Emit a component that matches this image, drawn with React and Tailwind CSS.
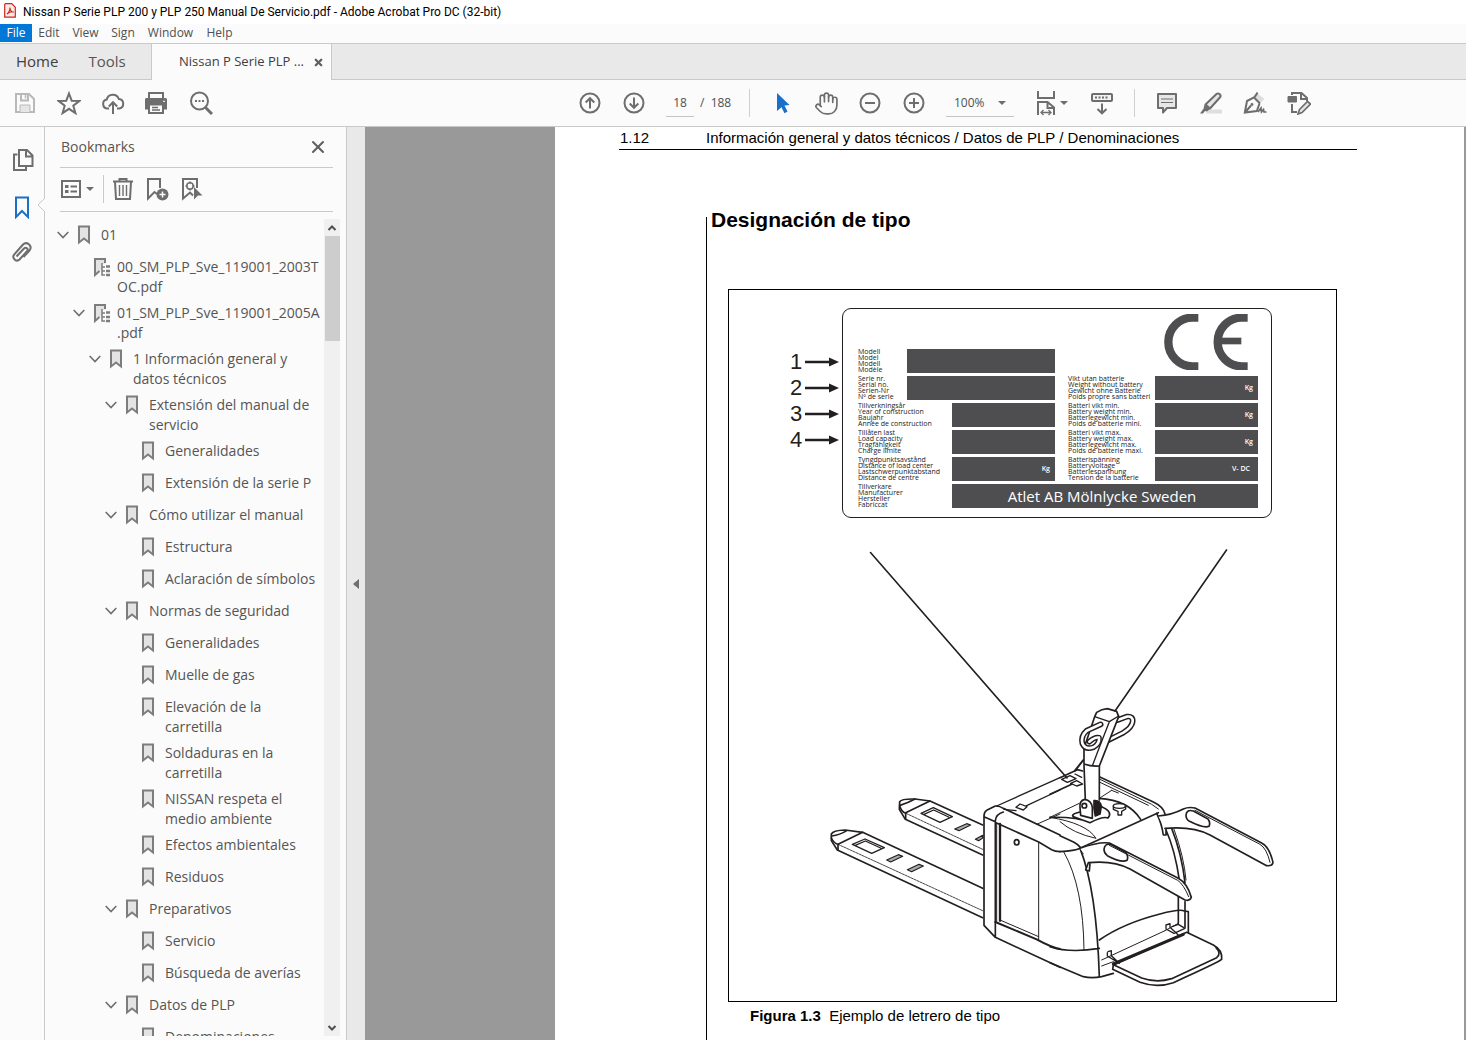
import React from "react";
import { Hand, X } from "lucide-react";

const UI = "font-['Open_Sans','Noto_Sans',sans-serif]";

function Svg({ size = "size-6", sw = 2, children }) {
  return (
    <svg viewBox="0 0 24 24" className={size + " shrink-0"} fill="none" stroke="currentColor" strokeWidth={sw} aria-hidden="true">
      {children}
    </svg>
  );
}

function ToolButton({ label, className = "w-11", children }) {
  return (
    <button type="button" aria-label={label} className={className + " flex h-11 shrink-0 items-center justify-center text-[#6e6e6e]"}>
      {children}
    </button>
  );
}

const Caret = () => (
  <svg viewBox="0 0 8 4" className="h-1 w-2 shrink-0" fill="#6e6e6e" aria-hidden="true"><path d="M0 0h8L4 4z" /></svg>
);

function TitleBar() {
  return (
    <header className="flex h-6 shrink-0 items-center bg-white pl-1 text-xs text-black">
      <svg viewBox="0 0 12 15" className="-mt-1 h-[15px] w-3" fill="none" stroke="#c8281e" aria-hidden="true">
        <path d="M1.5.7h6.2l3.6 3.6v9.9H.7V1.5z" fill="#fbe9e6" strokeWidth="1.2" />
        <path d="M3 11c1.600-1 3.200-4 2.900-6.400 0 3 2.200 4.700 3.900 4.400-2-.5-5 .3-6.800 2z" strokeWidth="1.100" />
      </svg>
      <h1 className="ml-[7px] font-[Roboto,sans-serif] whitespace-nowrap">Nissan P Serie PLP 200 y PLP 250 Manual De Servicio.pdf - Adobe Acrobat Pro DC (32-bit)</h1>
    </header>
  );
}

function MenuBar() {
  return (
    <nav className="flex h-[19px] shrink-0 items-start bg-[#fbfbfb] text-xs text-[#505050]">
      <button type="button" className="h-[18px] w-8 bg-[#0078d7] text-white">File</button>
      <button type="button" className="h-[18px] w-[34px]">Edit</button>
      <button type="button" className="h-[18px] w-[39px]">View</button>
      <button type="button" className="h-[18px] w-9">Sign</button>
      <button type="button" className="h-[18px] w-[59px]">Window</button>
      <button type="button" className="h-[18px] w-[39px]">Help</button>
    </nav>
  );
}

function TabBar() {
  return (
    <div className="flex h-[37px] shrink-0 border-t border-[#c9c9c9] bg-[#e9e9e9] text-[#404040]">
      <div className="flex w-[152px] items-center border-r border-b border-[#c9c9c9] text-[15px]">
        <button type="button" className="ml-4">Home</button>
        <button type="button" className="ml-[30px] text-[#555]">Tools</button>
      </div>
      <div className="flex w-[179px] items-center justify-between bg-[#fbfbfb] pr-[7px] pl-[27px] text-[13px]">
        <button type="button">Nissan P Serie PLP ...</button>
        <button type="button" aria-label="Close tab"><X className="size-[11px] text-[#606060]" strokeWidth={5} /></button>
      </div>
      <div className="flex-1 border-b border-l border-[#c9c9c9]" />
    </div>
  );
}

function Toolbar() {
  return (
    <div className="flex h-[47px] shrink-0 items-center border-b border-[#c9c9c9] bg-[#fbfbfb]">
      <div className="flex w-[568px] shrink-0 pl-[3px]">
        <ToolButton label="Save">
          <Svg><g stroke="#b9b9b9"><path d="M3 3h13l5 5v13H3z" /><path d="M8 3v6.500h7V3" /><path d="M12.500 4v3.500" strokeWidth="1.500" /><path d="M7 21v-7h10v7" fill="#e6e6e6" strokeWidth="1" /></g></Svg>
        </ToolButton>
        <ToolButton label="Star">
          <Svg><path d="M12 2.500l2.700 7.200 7.600.3-6 4.700 2.100 7.400L12 17.800l-6.400 4.300 2.100-7.400-6-4.700 7.600-.3z" /></Svg>
        </ToolButton>
        <ToolButton label="Upload to cloud">
          <Svg><path d="M8 17.500H6.500a4.500 4.500 0 0 1-.8-8.900A6.300 6.300 0 0 1 17.800 8a4.800 4.800 0 0 1 .5 9.500H16" /><path d="M12 23V11.500M7.800 15.500l4.200-4.300 4.200 4.300" /></Svg>
        </ToolButton>
        <ToolButton label="Print">
          <Svg><path d="M4 7V2h14v5" /><path d="M0 9c0-1.500.5-2 2-2h18c1.500 0 2 .5 2 2v9.500h-4V14H4v4.500H0z" fill="currentColor" stroke="none" /><path d="M4 13.500h14V22H4z" /><path d="M7 16.500h6M7 19h8" strokeWidth="1.300" /><path d="M18 10.300h2" stroke="#fff" strokeWidth="1" /></Svg>
        </ToolButton>
        <ToolButton label="Find">
          <Svg><circle cx="10.500" cy="10" r="8.500" /><path d="M16.500 16.500l6.500 6.500" strokeWidth="3" /><path d="M6 10h2M9.500 10h2M13 10h2" /></Svg>
        </ToolButton>
      </div>
      <ToolButton label="Previous page">
        <Svg><circle cx="12" cy="12" r="9.500" /><path d="M12 17.500V7.500M7.700 11.500L12 7.200l4.300 4.300" /></Svg>
      </ToolButton>
      <ToolButton label="Next page">
        <Svg><circle cx="12" cy="12" r="9.500" /><path d="M12 6.500v10M7.700 12.500l4.300 4.300 4.300-4.300" /></Svg>
      </ToolButton>
      <input aria-label="Page number" defaultValue="18" className="ml-[10px] h-7 w-7 border-b border-[#c4c4c4] bg-transparent text-center text-xs text-[#505050]" />
      <span className="ml-[6px] w-[49px] text-xs whitespace-pre text-[#505050]">/  188</span>
      <div className="h-7 w-px bg-[#cfcfcf]" />
      <ToolButton label="Select" className="ml-[11px] w-11">
        <svg viewBox="0 0 14 21" className="h-[21px] w-[14px]" fill="#1b6fc8"><path d="M1 0l12.500 12-5 .6 3 6-3 1.600-3-6L1 18z" /></svg>
      </ToolButton>
      <ToolButton label="Pan" className="-ml-px w-11"><Hand className="size-[25px]" strokeWidth={1.600} /></ToolButton>
      <ToolButton label="Zoom out"><Svg><circle cx="12" cy="12" r="9.500" /><path d="M7 12h10" /></Svg></ToolButton>
      <ToolButton label="Zoom in"><Svg><circle cx="12" cy="12" r="9.500" /><path d="M7 12h10M12 7v10" /></Svg></ToolButton>
      <div className="relative ml-[10px] w-[68px] shrink-0">
        <select aria-label="Zoom level" className="h-7 w-full appearance-none border-b border-[#c4c4c4] bg-transparent pl-2 text-xs text-[#505050]">
          <option>100%</option>
        </select>
        <div className="pointer-events-none absolute top-3 right-2"><Caret /></div>
      </div>
      <ToolButton label="Fit page" className="ml-[10px] w-14 gap-1">
        <svg viewBox="0 0 20 26" className="h-[26px] w-5" fill="none" stroke="currentColor" strokeWidth="2"><path d="M2 1v7h16V1M2 25V12h9.500l6.500 5.500V25M11.500 12v6H18" /><path d="M5 22.500h10M7.500 20L5 22.500 7.500 25M12.500 20l2.500 2.500-2.500 2.500" strokeWidth="1.300" /></svg>
        <Caret />
      </ToolButton>
      <ToolButton label="Page display">
        <Svg><rect x="2" y="3" width="20" height="7" rx="1" fill="#f2f2f2" /><path d="M5 6.500h14" strokeDasharray="2 1.500" /><path d="M12 12.500V22M7.500 18l4.500 4.300 4.500-4.300" /></Svg>
      </ToolButton>
      <div className="ml-[10px] h-7 w-px bg-[#cfcfcf]" />
      <ToolButton label="Comment" className="ml-[10px] w-11">
        <Svg><path d="M3 3h18v14h-9l-4 4.500V17H3z" fill="#e6e6e6" strokeLinejoin="round" /><path d="M6 8h12M6 11.500h12" strokeWidth="1.200" /></Svg>
      </ToolButton>
      <ToolButton label="Highlight">
        <Svg><path d="M9 18.500h14v4H7z" fill="#dedede" stroke="none" /><path d="M6.500 13.500L17.500 3c1.800-1.400 5 .5 3.800 3L11 17.500z" fill="#e6e6e6" strokeLinejoin="round" /><path d="M5.500 13.500l5.500 4.500-3 2.500-2-.5-2 2.500H1l3.500-4.800z" fill="currentColor" stroke="none" /></Svg>
      </ToolButton>
      <ToolButton label="Sign">
        <Svg><path d="M14 2l7.500 6-4 3.500L11 5.500z" fill="#dedede" stroke="none" /><path d="M14.500 1.500c-1 2-2 3.500-3.500 5L4 10 1.800 21.500l12-1.500 2.700-7.500M10.500 6l6.500 6.500M2 21.500l6-7" strokeWidth="2" /><circle cx="9" cy="13.500" r="1.400" fill="currentColor" stroke="none" /><path d="M15 21l3-4 .5 4 2-2.500.5 2.500h2.500" strokeWidth="1.700" /></Svg>
      </ToolButton>
      <ToolButton label="Edit PDF">
        <Svg><path d="M1 5.500h8.500V11H1z" fill="currentColor" strokeWidth="1" /><path d="M5 4V2h9.500l5.500 5v3M14 2v6h6" /><path d="M5 13v8h5" /><path d="M12.500 18.500l8-8 3 2.500-8.500 8.500-4 1.500z" fill="#e6e6e6" strokeWidth="1.700" /></Svg>
      </ToolButton>
    </div>
  );
}

function NavRail() {
  return (
    <div className="flex w-11 shrink-0 flex-col items-center bg-[#fbfbfb] pt-5">
      <button type="button" aria-label="Page thumbnails" className="ml-px flex h-[26px] items-center text-[#6e6e6e]">
        <Svg><path d="M6.500 6.500H3V22h12v-3.500" /><path d="M8 2h8l5.500 5.500V18H8zM15 2v6.500h6.500" /></Svg>
      </button>
      <button type="button" aria-label="Bookmarks" className="mt-[21px] flex h-[26px] items-center text-[#1b6fc8]">
        <Svg><path d="M6 2.500h12V22l-6-6-6 6z" /></Svg>
      </button>
      <button type="button" aria-label="Attachments" className="mt-5 flex h-[26px] items-center text-[#6e6e6e]">
        <Svg><path d="M6.500 15.500l7.500-8c2-2 4.800.5 3 2.700l-7.500 8.300c-3 3-8.300-1.500-5.200-5.200L13 3.500c3.500-3.500 10 1 6.500 6l-6 6.500" /></Svg>
      </button>
    </div>
  );
}

const bookmarks = [
  { level: 0, open: true, lines: ["01"] },
  { level: 1, file: true, lines: ["00_SM_PLP_Sve_119001_2003T", "OC.pdf"] },
  { level: 1, file: true, open: true, lines: ["01_SM_PLP_Sve_119001_2005A", ".pdf"] },
  { level: 2, open: true, lines: ["1 Información general y", "datos técnicos"] },
  { level: 3, open: true, lines: ["Extensión del manual de", "servicio"] },
  { level: 4, lines: ["Generalidades"] },
  { level: 4, lines: ["Extensión de la serie P"] },
  { level: 3, open: true, lines: ["Cómo utilizar el manual"] },
  { level: 4, lines: ["Estructura"] },
  { level: 4, lines: ["Aclaración de símbolos"] },
  { level: 3, open: true, lines: ["Normas de seguridad"] },
  { level: 4, lines: ["Generalidades"] },
  { level: 4, lines: ["Muelle de gas"] },
  { level: 4, lines: ["Elevación de la", "carretilla"] },
  { level: 4, lines: ["Soldaduras en la", "carretilla"] },
  { level: 4, lines: ["NISSAN respeta el", "medio ambiente"] },
  { level: 4, lines: ["Efectos ambientales"] },
  { level: 4, lines: ["Residuos"] },
  { level: 3, open: true, lines: ["Preparativos"] },
  { level: 4, lines: ["Servicio"] },
  { level: 4, lines: ["Búsqueda de averías"] },
  { level: 3, open: true, lines: ["Datos de PLP"] },
  { level: 4, lines: ["Denominaciones"] },
];

const indent = ["pl-3", "pl-7", "pl-11", "pl-[60px]", "pl-[76px]"];

function Bookmark({ item }) {
  return (
    <li className={indent[item.level] + " flex min-h-8 items-start py-[3px]"}>
      <span className="flex h-5 w-[21px] shrink-0 items-center">
        {item.open && (
          <button type="button" aria-label="Collapse">
            <svg viewBox="0 0 12 8" className="h-2 w-3" fill="none" stroke="#6e6e6e" strokeWidth="1.600"><path d="M.7 1L6 6.500 11.300 1" /></svg>
          </button>
        )}
      </span>
      {item.file ? (
        <svg viewBox="0 0 16 20" className="h-5 w-4 shrink-0" fill="none" stroke="#7d7d7d" strokeWidth="2" aria-hidden="true">
          <path d="M1 2h10v5H8v6l-3 1-4 3.500z" fill="#e3e3e3" stroke="none" /><path d="M5.500 14L1 18V2h10v4" /><path d="M8 6v12h3M8 10h3M8 14h3" strokeWidth="1.500" /><path d="M12 9.500h4M12 14h4M12 18h4" strokeWidth="2.500" />
        </svg>
      ) : (
        <svg viewBox="0 0 12 20" className="h-5 w-3 shrink-0" fill="#e3e3e3" stroke="#7d7d7d" strokeWidth="2" aria-hidden="true"><path d="M1 1.500h10v16l-5-4-5 4z" /></svg>
      )}
      <a href="#bookmark" className={(item.file ? "ml-[7px]" : "ml-[11px]") + " text-sm leading-5 whitespace-nowrap text-[#555]"}>
        {item.lines.map((l) => <span key={l} className="block">{l}</span>)}
      </a>
    </li>
  );
}

function BookmarksPanel() {
  return (
    <aside className="relative flex w-[303px] shrink-0 flex-col border-x border-[#c9c9c9] bg-[#fbfbfb]">
      <svg viewBox="0 0 8 14" className="absolute top-[71px] -left-2 h-[14px] w-2" fill="#fbfbfb" stroke="#c9c9c9" aria-hidden="true"><path d="M8 0L1 7l7 7" /></svg>
      <div className="mr-[13px] ml-[15px] flex h-[41px] items-center justify-between border-b border-[#c9c9c9] pr-[5px] pb-px pl-px">
        <h2 className="text-sm text-[#555]">Bookmarks</h2>
        <button type="button" aria-label="Close panel" className="text-[#606060]"><X className="size-5" strokeWidth={2.500} /></button>
      </div>
      <div className="mr-[13px] ml-[15px] flex h-11 items-center border-b border-[#c9c9c9] pb-px pl-px text-[#6e6e6e]">
        <button type="button" aria-label="Options" className="flex items-center gap-[5px]">
          <svg viewBox="0 0 20 18" className="h-[18px] w-5" fill="none" stroke="currentColor" strokeWidth="2"><path d="M1 1h18v16H1z" /><path d="M4 6.500h3.500M4 11.500h3.500" strokeWidth="3" /><path d="M9.500 6.500H16M9.500 11.500H16" /></svg>
          <Caret />
        </button>
        <div className="ml-[9px] h-7 w-px bg-[#c9c9c9]" />
        <button type="button" aria-label="Delete" className="ml-[7px]">
          <Svg><path d="M2 4.500h20M8.500 4V2h7v2M4 5l1 17h14l1-17" /><path d="M8.500 8v11M12 8v11M15.500 8v11" strokeWidth="1.400" /></Svg>
        </button>
        <button type="button" aria-label="New bookmark" className="ml-[10px]">
          <Svg><path d="M12 17l-2.500-2L3 21.500V2h12v9" /><circle cx="17.500" cy="17.500" r="6" fill="currentColor" stroke="none" /><path d="M14.500 17.500h6M17.500 14.500v6" stroke="#fff" strokeWidth="1.500" /></Svg>
        </button>
        <button type="button" aria-label="Find bookmark" className="ml-[11px]">
          <Svg><path d="M13 18.500l-3-3L3 21.500V2h14v9" /><circle cx="10" cy="9" r="3.200" strokeWidth="1.500" /><path d="M10 4.500v2M10 11.500v2M5.500 9h2M12.500 9h2" strokeWidth="1.500" /><path d="M14 10l8.500 8.500h-4.500L14 22.500z" fill="currentColor" stroke="none" /></Svg>
        </button>
      </div>
      <div className="mt-[7px] mb-1 flex min-h-0 flex-1">
        <ul className="min-w-0 flex-1 overflow-hidden pt-[3px]">
          {bookmarks.map((b, i) => <Bookmark key={i} item={b} />)}
        </ul>
        <div className="mr-[6px] flex w-4 shrink-0 flex-col items-center bg-[#f0f0f0]">
          <svg viewBox="0 0 16 17" className="h-[17px] w-4" fill="none" stroke="#505050" strokeWidth="2"><path d="M4.500 11L8 7.500l3.500 3.500" /></svg>
          <div className="h-[105px] w-[15px] bg-[#cdcdcd]" />
          <svg viewBox="0 0 16 17" className="mt-auto h-[17px] w-4" fill="none" stroke="#505050" strokeWidth="2"><path d="M4.500 7L8 10.500 11.500 7" /></svg>
        </div>
      </div>
    </aside>
  );
}

const PLATE_LABEL = "text-[7px] leading-[6px] font-medium whitespace-nowrap text-[#222]";

function PlateRow({ lines, unit, wide }) {
  return (
    <div className="flex h-6 justify-between">
      <div className={PLATE_LABEL}>
        {lines.map((l, i) => <div key={i}>{l}</div>)}
      </div>
      <div className={(wide ? "w-[148px]" : "w-[103px]") + " flex shrink-0 items-center justify-end bg-[#4e4e50] text-[7px] font-semibold text-white " + (unit === "V- DC" ? "pr-2" : "pr-[5px]")}>{unit}</div>
    </div>
  );
}

const leftRows = [
  { wide: true, lines: ["Modell", "Model", "Modell", "Modèle"] },
  { wide: true, lines: ["Serie nr.", "Serial no.", "Serien-Nr", "Nº de serie"] },
  { lines: ["Tillverkningsår", "Year of construction", "Baujahr", "Année de construction"] },
  { lines: ["Tillåten last", "Load capacity", "Tragfähigkeit", "Charge limite"] },
  { unit: "Kg", lines: ["Tyngdpunktsavstånd", "Distance of load center", "Lastschwerpunktabstand", "Distance de centre"] },
];
const rightRows = [
  { unit: "Kg", lines: ["Vikt utan batterie", "Weight without battery", "Gewicht ohne Batterie", "Poids propre sans batteri"] },
  { unit: "Kg", lines: ["Batteri vikt min.", "Battery weight min.", "Batteriegewicht min.", "Poids de batterie mini."] },
  { unit: "Kg", lines: ["Batteri vikt max.", "Battery weight max.", "Batteriegewicht max.", "Poids de batterie maxi."] },
  { unit: "V- DC", lines: ["Batterispänning", "Batteryvoltage", "Batteriespannung", "Tension de la batterie"] },
];

function TypePlate() {
  return (
    <div className="flex pt-[18px] pl-[61px]">
      <ol className="mt-[42px] flex w-[52px] shrink-0 flex-col gap-[2px] text-[22px] text-[#231f20]">
        {[1, 2, 3, 4].map((n) => (
          <li key={n} className="flex h-6 items-center gap-[3px] leading-6">
            {n}
            <svg viewBox="0 0 34 10" className="h-[10px] w-[34px]" aria-hidden="true"><path d="M0 5h26" stroke="#231f20" strokeWidth="2.500" /><path d="M24 .5L34 5l-10 4.500z" fill="#231f20" /></svg>
          </li>
        ))}
      </ol>
      <div className={UI + " flex h-[210px] w-[430px] flex-col gap-[3px] rounded-[9px] border border-[#231f20] pr-[13px] pl-[15px]"}>
        <div className="flex gap-[13px]">
          <div className="mt-10 flex w-[197px] flex-col gap-[3px]">
            {leftRows.map((r, i) => <PlateRow key={i} {...r} />)}
          </div>
          <div className="flex flex-1 flex-col gap-[3px]">
            <svg viewBox="345 42 250 168" className="mt-[5px] mr-[10px] mb-[3px] h-[56px] w-[84px] self-end" fill="none" stroke="#4e4e50" role="img" aria-label="CE">
              <path d="M447 53h-17a73 73 0 0 0 0 146h17M595 53h-17a73 73 0 0 0 0 146h17" strokeWidth="25" /><path d="M510 123h66" strokeWidth="20" />
            </svg>
            {rightRows.map((r, i) => <PlateRow key={i} {...r} />)}
          </div>
        </div>
        <div className="flex h-6 justify-between">
          <div className={PLATE_LABEL}>
            <div>Tillverkare</div><div>Manufacturer</div><div>Hersteller</div><div>Fabriccat</div>
          </div>
          <div className="flex w-[306px] items-center justify-center bg-[#4e4e50] pr-1.5 text-[15px] font-medium text-white">Atlet AB Mölnlycke Sweden</div>
        </div>
      </div>
    </div>
  );
}

function Truck() {
  return (
    <svg viewBox="729 518 608 482" className="block w-[608px]" fill="none" stroke="#231f20" strokeLinejoin="round" strokeLinecap="round" role="img" aria-label="Carretilla PLP">
      <g transform="translate(820 690) scale(.333333)" strokeWidth="5">
        {/* forks */}
        <path d="M488 405L330 333L285 327Q245 326 239 335L238 358L256 388L488 495" />
        <path d="M285 327Q265 338 240 346M330 333L257 368V387M239 347Q244 365 257 370" />
        <path d="M488 595L128 427L75 420Q40 421 34 432V452L52 480L488 683" />
        <path d="M80 422Q60 435 35 438M128 427L54 463V480M34 444Q42 460 54 463" />
        <g strokeWidth="2.500"><path d="M258 370L488 478M54 463L488 662" strokeDasharray="7 3" /></g>
        <g strokeWidth="4">
          <path d="M303 370L340 353L397 380L360 397ZM312 373L341 360L386 381" />
          <path d="M97 463L135 447L193 473L155 490ZM106 466L136 453L182 474" />
        </g>
        <g fill="#aaa" strokeWidth="3.500">
          <path d="M404 417L440 401L452 405L417 422ZM466 448L488 436V444L476 452ZM200 510L235 494L248 499L212 516ZM262 539L297 523L310 528L275 545Z" />
        </g>
        {/* chassis side */}
        <path d="M526 742L492 706V378Q492 366 500 361L526 348Q538 347 550 355L720 435M492 380L526 395M526 742V392Q528 372 550 366M526 742L720 832" />
        <path d="M530 348L720 263M552 358L588 362M620 347L720 300M588 352L600 342L621 350L610 360Z" strokeWidth="4" />
        <path d="M528 398L656 456L695 479Q705 484 720 485" />
        <path d="M540 402V692" strokeWidth="7" />
        <path d="M530 400V695M656 457V750M540 690L656 740" strokeWidth="3" />
        <path d="M526 696L650 748Q690 770 720 777" strokeWidth="6" />
        <ellipse cx="590" cy="457" rx="7" ry="8" />
        <path d="M650 403L720 372" strokeWidth="3" />
      </g>
      <g transform="translate(1050 690) scale(.333333)" strokeWidth="5">
        {/* top cover */}
        <path d="M30 263L82 239L98 243M148 260L310 336Q340 350 345 372M0 313L65 283" />
        <path d="M148 267L305 343L325 357M148 276L295 346" strokeWidth="3" />
        <path d="M35 268L60 257L78 266L52 277ZM75 252L95 262M62 280L80 272L98 282L80 288Z" strokeWidth="4" />
        <path d="M148 325L185 301M185 301L205 309M0 382L88 340" strokeWidth="3" />
        <path d="M148 325Q235 330 272 388M0 382Q80 380 120 398Q160 378 174 384Q190 366 155 350M90 366Q55 375 75 382L120 398" />
        <path d="M0 382Q110 400 138 445Q70 430 30 395" strokeWidth="3" />
        <path d="M90 475L325 368M30 437L72 457Q95 470 100 490M30 485Q75 483 90 475" />
        {/* rear shell */}
        <path d="M90 475Q140 600 148 860M0 770Q60 790 148 775M0 818L100 860Q125 866 155 860L190 850" />
        <path d="M42 487Q100 590 102 780" strokeWidth="3" />
        <path d="M148 750Q220 700 330 672Q390 656 403 663L415 665V728" />
        <path d="M320 370Q335 400 340 435L348 435V417M365 415Q395 490 405 578M348 420Q375 480 388 570M385 615V700M405 635V712" />
        <path d="M372 418Q402 500 408 570M155 810L345 722M385 700L345 722M155 828L190 815" strokeWidth="3" />
        {/* arm rests */}
        <g fill="#fff">
          <path d="M90 475Q145 455 178 459L385 565Q412 580 424 622Q420 634 405 630L240 537Q190 510 115 518L107 540L118 543L120 520" />
          <path d="M325 378Q365 375 400 357Q415 350 435 354L635 459Q658 470 669 517Q667 529 650 527L480 435Q430 408 345 415" />
          <path d="M162 478Q164 458 184 464L228 488Q236 500 231 511Q215 520 172 497Q162 490 162 478Z" />
          <path d="M408 375Q410 357 430 363L474 387Q482 398 477 409Q462 416 417 393Q408 388 408 375Z" />
        </g>
        <path d="M178 466L383 571Q400 582 416 620M435 361L630 463Q650 475 660 517" strokeWidth="3" />
        {/* platform */}
        <g fill="#fff">
          <path d="M190 825L410 727L490 765Q518 780 515 808Q510 815 370 878Q320 895 270 877L188 838Z" />
        </g>
        <path d="M192 825L275 864Q320 880 365 866L500 803Q515 790 498 773" />
        <path d="M190 822L400 733" strokeWidth="9" />
        <path d="M174 785L184 782V797L208 820M172 788V798L200 815M348 705L360 701V712L385 735M348 705V717L372 730L405 715L385 703L366 710" strokeWidth="4" />
        {/* lift handle */}
        <path d="M100 210L75 242" strokeWidth="6" />
        <path d="M102 225V330H148V228Z" fill="#fff" stroke="none" />
        <path d="M102 225L106 330M148 228V330" />
        <path d="M203 90L230 80Q250 77 248 95Q246 112 220 128L172 152" strokeWidth="17" />
        <path d="M203 90L230 80Q250 77 248 95Q246 112 220 128L172 152" strokeWidth="8" stroke="#fff" />
        <path d="M134 80L102 175V222Q125 230 148 228L206 80L200 64L172 56Q155 57 140 67Z" fill="#fff" />
        <path d="M134 80L178 95L206 78M178 95L145 180L128 225" strokeWidth="4" />
        <path d="M152 103L110 122Q92 138 97 160Q105 180 130 172Q150 160 147 143Q135 140 118 155" strokeWidth="17" />
        <path d="M152 103L110 122Q92 138 97 160Q105 180 130 172Q150 160 147 143Q135 140 118 155" strokeWidth="8" stroke="#fff" />
        <path d="M90 352Q88 332 104 328Q124 331 127 352V385L92 376Z" fill="#fff" />
        <circle cx="103" cy="347" r="7" />
        <path d="M132 332Q150 330 154 348L150 372L136 378L132 355Z" fill="#231f20" />
        <path d="M190 348V358L204 364V375H215V364L227 357V348" fill="#fff" strokeWidth="4" />
        <ellipse cx="208" cy="348" rx="18" ry="7" fill="#fff" strokeWidth="4" />
      </g>
      {/* leader lines */}
      <path d="M870.500 552.500L1067 778M1226.500 550L1115 711" strokeWidth="1.600" />
    </svg>
  );
}

function Document() {
  return (
    <main className="flex min-w-0 flex-1 overflow-hidden bg-[#999] pr-[2px] pl-[190px] font-['Liberation_Sans',Arial,sans-serif] text-black">
      <article className="flex min-w-0 flex-1 flex-col bg-white pl-16">
        <div className="mr-[107px] flex h-[23px] items-start border-b border-black pt-[3px] text-[15px] leading-4">
          <span className="w-[87px] shrink-0 pl-px">1.12</span>
          <span className="whitespace-nowrap">Información general y datos técnicos / Datos de PLP / Denominaciones</span>
        </div>
        <section className="mt-[67px] ml-[87px] flex-1 border-l border-black">
          <h2 className="ml-1 text-[21px] leading-[6px] font-bold">Designación de tipo</h2>
          <figure className="mt-[66px] ml-[21px]">
            <div className="w-[609px] border border-black pb-px"><TypePlate /><Truck /></div>
            <figcaption className="mt-[6px] ml-[22px] text-[15px] leading-4 whitespace-pre"><b>Figura 1.3</b>  Ejemplo de letrero de tipo</figcaption>
          </figure>
        </section>
      </article>
    </main>
  );
}

export default function App() {
  return (
    <div className={UI + " flex h-screen flex-col overflow-hidden bg-[#fbfbfb]"}>
      <TitleBar />
      <MenuBar />
      <TabBar />
      <Toolbar />
      <div className="flex min-h-0 flex-1">
        <NavRail />
        <BookmarksPanel />
        <button type="button" aria-label="Collapse panel" className="flex w-[18px] shrink-0 items-center justify-center bg-[#e9e9e9]">
          <svg viewBox="0 0 6 10" className="h-[10px] w-[6px]" fill="#6e6e6e"><path d="M6 0v10L0 5z" /></svg>
        </button>
        <Document />
      </div>
    </div>
  );
}
